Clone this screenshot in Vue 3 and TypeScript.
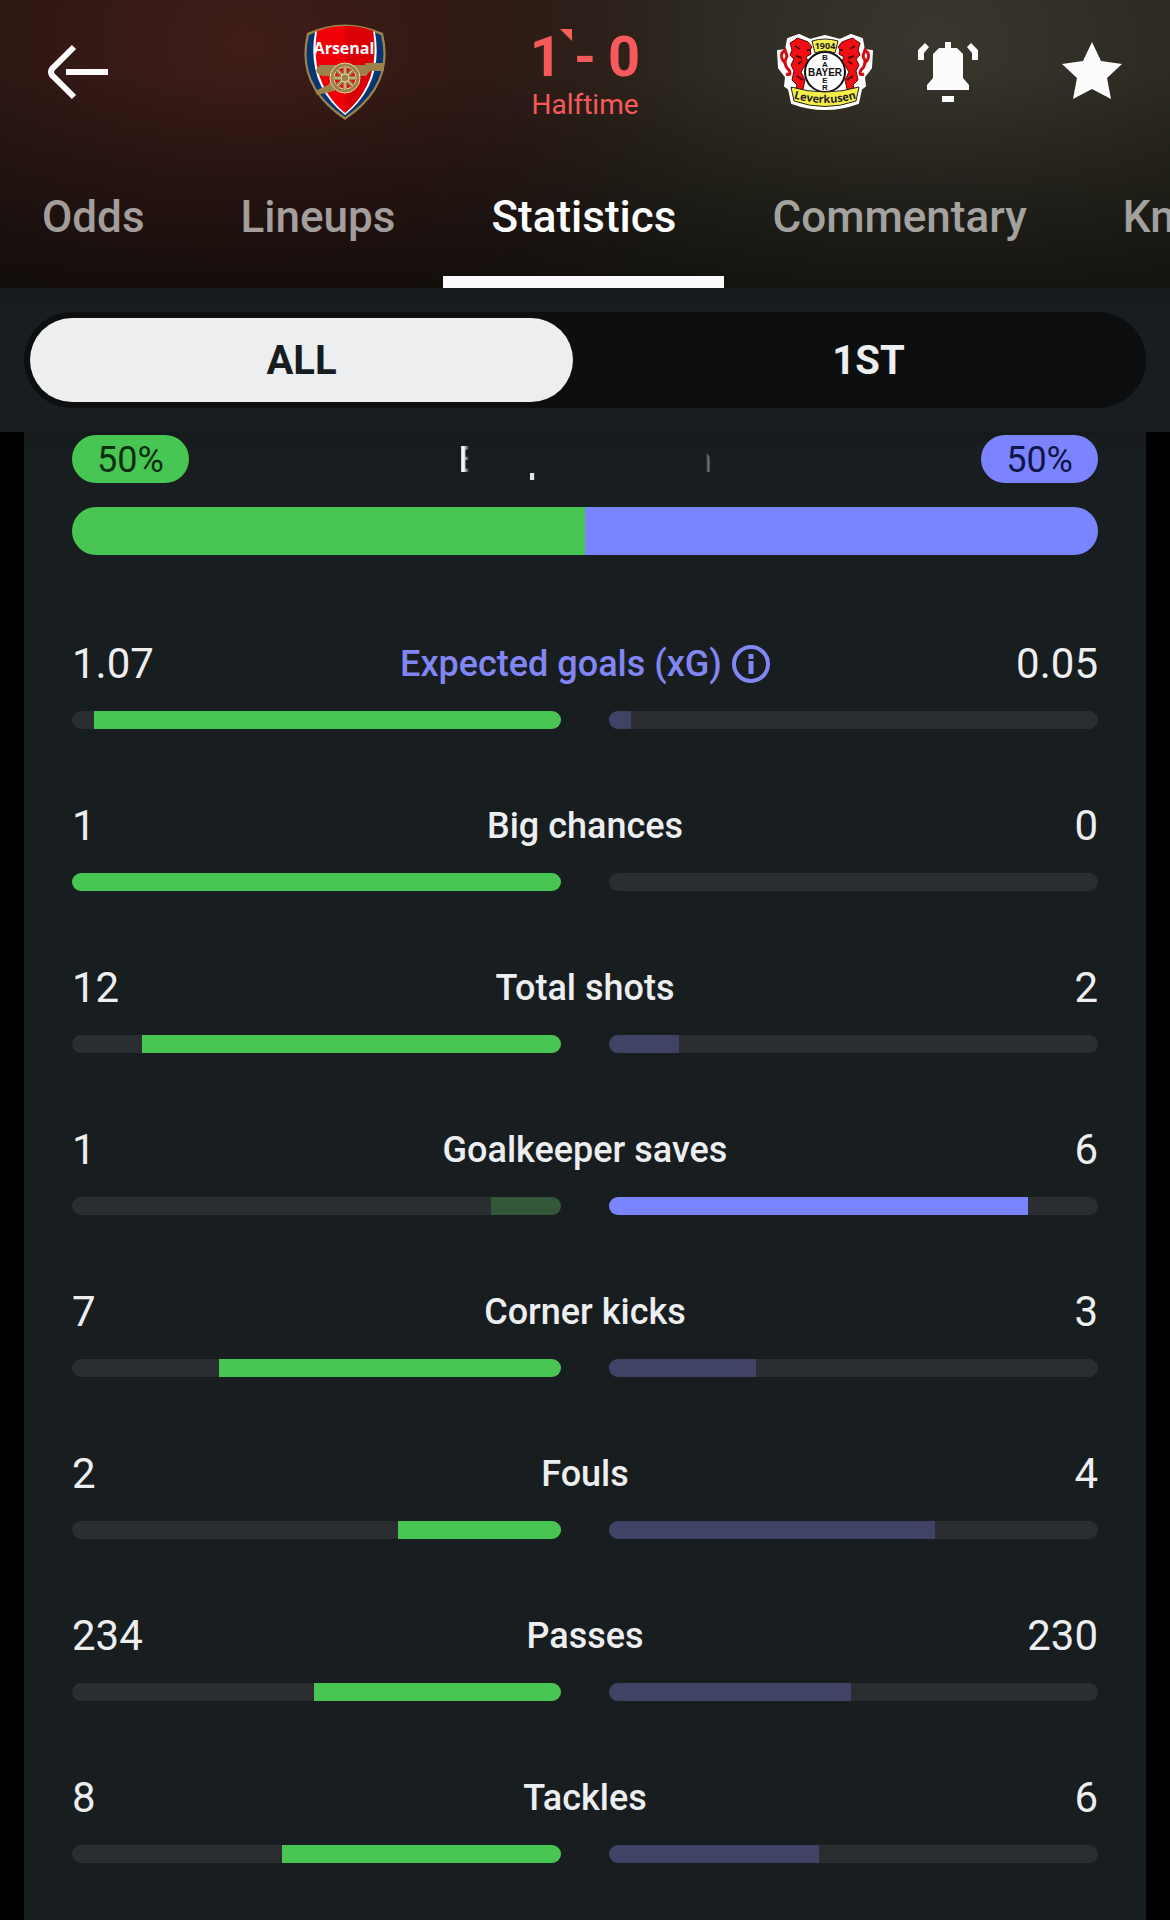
<script setup lang="ts">
import { computed, ref } from 'vue'

interface Stat {
  name: string
  home: number
  away: number
  homeLead: boolean
  awayLead: boolean
  decimals?: number
  info?: boolean
}

const tabs: string[] = ['Odds', 'Lineups', 'Statistics', 'Commentary', 'Knockout']
const activeTab = ref('Statistics')

const periods: string[] = ['ALL', '1ST']
const activePeriod = ref('ALL')

const possession = { home: 50, away: 50 }

const stats: Stat[] = [
  { name: 'Expected goals (xG)', home: 1.07, away: 0.05, homeLead: true, awayLead: false, decimals: 2, info: true },
  { name: 'Big chances', home: 1, away: 0, homeLead: true, awayLead: false },
  { name: 'Total shots', home: 12, away: 2, homeLead: true, awayLead: false },
  { name: 'Goalkeeper saves', home: 1, away: 6, homeLead: false, awayLead: true },
  { name: 'Corner kicks', home: 7, away: 3, homeLead: true, awayLead: false },
  { name: 'Fouls', home: 2, away: 4, homeLead: true, awayLead: false },
  { name: 'Passes', home: 234, away: 230, homeLead: true, awayLead: false },
  { name: 'Tackles', home: 8, away: 6, homeLead: true, awayLead: false },
]

const rows = computed(() =>
  stats.map((s) => {
    const total = s.home + s.away
    return {
      ...s,
      homeText: s.home.toFixed(s.decimals ?? 0),
      awayText: s.away.toFixed(s.decimals ?? 0),
      homeWidth: `${(s.home / total) * 100}%`,
      awayWidth: `${(s.away / total) * 100}%`,
    }
  }),
)
</script>

<template>
  <div class="screen">
    <header class="hero">
      <div class="bar">
        <button class="icon-btn back" type="button" aria-label="Back">
          <svg width="60" height="60" viewBox="0 0 60 60" fill="none" stroke="#fcfafb" stroke-width="6">
            <path d="M26 5 4 27Q2 30 4 33L26 55M18 30h42" />
          </svg>
        </button>

        <div class="match">
          <div class="crest">
            <svg width="82" height="96" viewBox="0 0 82 96" role="img" aria-label="Arsenal">
              <path d="M3 9Q41-8 79 9 92 62 41 96-10 62 3 9Z" fill="#9c824a" />
              <path d="M5 11Q41-5 77 11 89 61 41 93-7 61 5 11Z" fill="#063672" />
              <path d="M11 8Q41-3 71 8 80 60 41 91 2 60 11 8Z" fill="#fff" />
              <path d="M13 7Q41-3 69 7 77 59 41 89 5 59 13 7Z" fill="#ef0107" />
              <path d="M41 2Q56 2 69 7 77 59 41 89Z" fill="#db0007" />
              <path d="M12 46 16 41H61V39H80V47H66L62 52H19Q13 51 12 46Z" fill="#9c824a" />
              <path d="M30 54 24 61 11 67 13 71 30 67 37 60Z" fill="#9c824a" />
              <g fill="none" stroke="#e8d8a4">
                <circle cx="41" cy="54" r="15" fill="#9c824a" stroke-width="1" />
                <circle cx="41" cy="54" r="11" fill="#db1512" stroke-width="1" />
                <path d="M41 43v22M30 54h22M33 46l16 16M49 46 33 62" stroke="#9c824a" stroke-width="4" />
                <path d="M41 43v22M30 54h22M33 46l16 16M49 46 33 62" stroke-width="1" />
                <circle cx="41" cy="54" r="4" fill="#9c824a" />
              </g>
              <text x="40" y="30" class="arsenal-name" text-anchor="middle">Arsenal</text>
            </svg>
          </div>

          <div class="score">
            <div class="score-line">
              <span>1</span><span class="dash">-</span><span>0</span>
              <svg class="goal-mark" width="12" height="12" viewBox="0 0 12 12"><path d="M0 0h12v12z" fill="#f8605c" /></svg>
            </div>
            <div class="score-state">Halftime</div>
          </div>

          <div class="crest">
            <svg width="96" height="76" viewBox="0 0 96 76" role="img" aria-label="Bayer Leverkusen">
              <path
                d="M11 5 22 1 33 6 48 2 63 6 74 1 85 5 87 16 95 17 94 34 87 43 88 52 84 55 81 69Q48 81 15 69L12 55 8 52 9 43 2 34 1 17 9 16Z"
                fill="#fff" stroke="#fff" stroke-width="2" stroke-linejoin="round"
              />
              <g>
                <path
                  d="M13 9 18 6 20 4 26 6 31 8 35 13 33 16 34 20 29 23 31 27 27 33 24 38 28 46 26 55 29 60 17 60 20 51 15 46 17 37 14 31 17 25 13 21 15 16Z"
                  fill="#f00f12" stroke="#5c0508" stroke-width="1"
                />
                <path d="M8 29Q3 24 5 19L8 16 10 22 8 27Q8 33 12 36 15 42 9 40" fill="none" stroke="#d10d12" stroke-width="3" />
                <path d="M18 12 23 15M19 22l6 2M21 30l4-3M20 42l6 4M30 16h4" stroke="#5c0508" stroke-width="2" />
              </g>
              <g>
                <path
                  d="M83 9 78 6 76 4 70 6 65 8 61 13 63 16 62 20 67 23 65 27 69 33 72 38 68 46 70 55 67 60 79 60 76 51 81 46 79 37 82 31 79 25 83 21 81 16Z"
                  fill="#f00f12" stroke="#5c0508" stroke-width="1"
                />
                <path d="M88 29Q93 24 91 19L88 16 86 22 88 27Q88 33 84 36 81 42 87 40" fill="none" stroke="#d10d12" stroke-width="3" />
                <path d="M78 12 73 15M77 22l-6 2M75 30l-4-3M76 42l-6 4M66 16h-4" stroke="#5c0508" stroke-width="2" />
              </g>
              <circle cx="48" cy="38" r="20" fill="#fff" stroke="#111" stroke-width="2" />
              <path d="M35 7Q48 3 61 7L58 19Q48 15 38 19Z" fill="#f6ee4b" stroke="#222" stroke-width="1" />
              <text x="48" y="15" class="crest-year" text-anchor="middle">1904</text>
              <text x="48" y="42" class="crest-bayer" text-anchor="middle">BAYER</text>
              <g class="crest-down" text-anchor="middle">
                <text x="48" y="26">B</text>
                <text x="48" y="33">A</text>
                <text x="48" y="49">E</text>
                <text x="48" y="56">R</text>
              </g>
              <path d="M14 53Q48 63 82 53L79 67Q48 78 17 67Z" fill="#f6ee4b" stroke="#222" stroke-width="1" />
              <path id="ribbon" d="M16 64Q48 74 80 64" fill="none" />
              <text class="crest-ribbon" text-anchor="middle"><textPath href="#ribbon" startOffset="50%">Leverkusen</textPath></text>
            </svg>
          </div>
        </div>

        <div class="actions">
          <button class="icon-btn" type="button" aria-label="Notifications">
            <svg width="60" height="60" viewBox="0 0 60 60" fill="#fcfcfd">
              <path d="M27 0h6v6h6l6 6v24l6 7v5H9v-5l6-7V12l6-6h6zM24 54h12v6H24zM7 1l4 4-5 6v7H0V8zM53 1l-4 4 5 6v7h6V8z" />
            </svg>
          </button>
          <button class="icon-btn" type="button" aria-label="Favourite">
            <svg width="60" height="60" viewBox="0 0 60 60" fill="#fcfcfd">
              <path d="M30 0 39 19 60 22 45 36 49 57 30 47 11 57 15 36 0 22 21 19Z" />
            </svg>
          </button>
        </div>
      </div>

      <nav class="tabs">
        <button
          v-for="tab in tabs"
          :key="tab"
          type="button"
          class="tab"
          :class="{ active: tab === activeTab }"
          @click="activeTab = tab"
        >
          {{ tab }}
        </button>
      </nav>
    </header>

    <div class="period-panel">
      <div class="periods">
        <button
          v-for="period in periods"
          :key="period"
          type="button"
          class="period"
          :class="{ active: period === activePeriod }"
          @click="activePeriod = period"
        >
          {{ period }}
        </button>
      </div>
    </div>

    <main class="card">
      <section class="possession">
        <div class="possession-head">
          <span class="pill home">{{ possession.home }}%</span>
          <span class="fading">Ball possession</span>
          <span class="pill away">{{ possession.away }}%</span>
        </div>
        <div class="possession-bar">
          <div class="share home" :style="{ width: possession.home + '%' }"></div>
          <div class="share away" :style="{ width: possession.away + '%' }"></div>
        </div>
      </section>

      <section class="stats">
        <div v-for="row in rows" :key="row.name" class="stat">
          <div class="stat-head">
            <span class="value">{{ row.homeText }}</span>
            <a v-if="row.info" href="#" class="label link">
              {{ row.name }}
              <svg width="38" height="38" viewBox="0 0 38 38" fill="none" stroke="#8286f3" stroke-width="4">
                <circle cx="19" cy="19" r="17" />
                <path d="M19 16v13M19 9v5" stroke-width="5" />
              </svg>
            </a>
            <span v-else class="label">{{ row.name }}</span>
            <span class="value right">{{ row.awayText }}</span>
          </div>
          <div class="tracks">
            <div class="track reverse">
              <div class="fill home" :class="{ dim: !row.homeLead }" :style="{ width: row.homeWidth }"></div>
            </div>
            <div class="track">
              <div class="fill away" :class="{ dim: !row.awayLead }" :style="{ width: row.awayWidth }"></div>
            </div>
          </div>
        </div>
      </section>
    </main>
  </div>
</template>

<style>
body {
  margin: 0;
  background: #000;
}
</style>

<style scoped>
.screen {
  display: flex;
  flex-direction: column;
  min-height: 100vh;
  background: #000;
  color: #edeef0;
  font-family: Roboto, 'Liberation Sans', sans-serif;
  overflow: hidden;
}

button {
  padding: 0;
  border: 0;
  background: none;
  font-family: inherit;
  color: inherit;
  cursor: pointer;
}

svg {
  display: block;
}

.hero {
  background:
    linear-gradient(180deg, transparent 25%, rgba(8, 7, 6, 0.6) 100%),
    radial-gradient(ellipse 40% 140% at 21% 15%, #3f1d18 0%, rgba(54, 24, 20, 0.8) 45%, transparent 100%),
    radial-gradient(ellipse 52% 180% at 80% 15%, #39362e 0%, rgba(46, 45, 34, 0.8) 45%, transparent 100%),
    #1a1714;
}

.bar {
  display: grid;
  grid-template-columns: 1fr 576px 1fr;
  align-items: center;
  height: 144px;
  padding: 0 48px;
}

.icon-btn {
  width: 60px;
  height: 60px;
}

.match {
  display: flex;
  align-items: center;
  justify-content: space-between;
}

.crest {
  display: flex;
  justify-content: center;
  width: 96px;
}

.arsenal-name {
  font: 700 16px 'Open Sans', sans-serif;
  fill: #fff;
}

.crest-year {
  font: 700 9px 'Open Sans', sans-serif;
  fill: #222;
}

.crest-bayer,
.crest-down {
  font: 700 10px 'Liberation Sans', sans-serif;
  fill: #111;
}

.crest-down {
  font-size: 8px;
}

.crest-ribbon {
  font: 700 11px 'Open Sans', sans-serif;
  fill: #222;
}

.score {
  display: flex;
  flex-direction: column;
  align-items: center;
  gap: 4px;
  padding-top: 6px;
  color: #f8595a;
}

.score-line {
  position: relative;
  display: flex;
  gap: 12px;
  font-size: 56px;
  font-weight: 700;
  line-height: 56px;
}

.goal-mark {
  position: absolute;
  top: 0;
  left: 30px;
}

.score-state {
  font-size: 28px;
  line-height: 32px;
}

.actions {
  display: flex;
  justify-content: flex-end;
  gap: 84px;
}

.tabs {
  display: flex;
  height: 144px;
  margin-left: -6px;
}

.tab {
  flex: none;
  padding: 14px 48px 0;
  border-bottom: 12px solid transparent;
  font-size: 44px;
  font-weight: 500;
  color: rgba(255, 255, 255, 0.6);
}

.tab.active {
  border-color: #fcfafc;
  color: #fff;
}

.period-panel {
  padding: 24px;
  background: linear-gradient(180deg, #15191d 0, #181e1f 20px);
}

.periods {
  display: flex;
  gap: 24px;
  padding: 6px;
  border-radius: 48px;
  background: #0c0e0f;
}

.period {
  flex: 1;
  height: 84px;
  border-radius: 42px;
  font-size: 40px;
  font-weight: 700;
  color: #edeef0;
}

.period.active {
  background: #edeef0;
  color: #171d1f;
}

.card {
  flex: 1;
  margin: 0 24px;
  padding: 3px 48px 57px;
  background: linear-gradient(180deg, #15191c 0, #181d1f 16px);
}

.possession {
  display: flex;
  flex-direction: column;
  gap: 24px;
}

.possession-head {
  display: flex;
  align-items: center;
  justify-content: space-between;
}

.pill {
  padding: 2px 25px 0;
  border-radius: 24px;
  font-size: 36px;
  line-height: 46px;
}

.pill.home {
  background: #48c654;
  color: #092d11;
}

.pill.away {
  background: #7b83ff;
  color: #0f1649;
}

.fading {
  padding-top: 2px;
  font-size: 36px;
  font-weight: 500;
  line-height: 46px;
  color: transparent;
  background:
    linear-gradient(90deg, #f4f4f6 6px, #181d1f 11px) left / 12px 100% no-repeat,
    linear-gradient(#e4e4e6, #e4e4e6) 70px 38px / 8px 8px no-repeat,
    linear-gradient(90deg, #181d1f, #f4f4f6) right / 6px 100% no-repeat,
    #181c1e;
  background-clip: text;
  -webkit-background-clip: text;
}

.possession-bar {
  display: flex;
  height: 48px;
  border-radius: 24px;
  overflow: hidden;
}

.share.home,
.fill.home {
  background: #49c554;
}

.share.away,
.fill.away {
  background: #7b84ff;
}

.stats {
  display: flex;
  flex-direction: column;
  gap: 72px;
  margin-top: 84px;
}

.stat {
  display: flex;
  flex-direction: column;
  gap: 22px;
}

.stat-head {
  display: grid;
  grid-template-columns: 1fr auto 1fr;
  align-items: center;
  line-height: 50px;
}

.value {
  font-size: 42px;
}

.right {
  text-align: right;
}

.label {
  font-size: 36px;
  font-weight: 500;
}

.link {
  display: flex;
  align-items: center;
  gap: 10px;
  color: #8286f3;
  text-decoration: none;
}

.tracks {
  display: grid;
  grid-template-columns: 1fr 1fr;
  gap: 48px;
}

.track {
  display: flex;
  height: 18px;
  border-radius: 9px;
  background: #2a2e31;
  overflow: hidden;
}

.track.reverse {
  justify-content: flex-end;
}

.fill.home.dim {
  background: #34573b;
}

.fill.away.dim {
  background: #3f4466;
}
</style>
